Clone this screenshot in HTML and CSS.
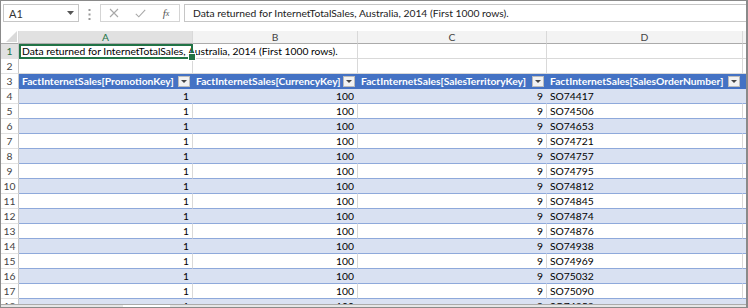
FILE: index.html
```html
<!DOCTYPE html>
<html lang="en">
<head>
    <meta charset="UTF-8" />
    <title>Book1 - Excel</title>
    <link rel="stylesheet" href="styles.css">
</head>
<body>
    <div class="window">
        <div class="formula-bar">
            <div class="name-box">
                <span>A1</span>
                <svg class="caret" width="7" height="4" viewBox="0 0 7 4"><path d="M0 0h7L3.5 4z" fill="#555"/></svg>
            </div>
            <svg class="grip" width="3" height="11" viewBox="0 0 3 11">
                <rect x="0.5" y="0" width="2" height="2" fill="#999"/>
                <rect x="0.5" y="4.5" width="2" height="2" fill="#999"/>
                <rect x="0.5" y="9" width="2" height="2" fill="#999"/>
            </svg>
            <div class="fx-buttons">
                <span class="fx-btn">
                    <svg width="10" height="10" viewBox="0 0 10 10"><path d="M1 1l8 8M9 1l-8 8" stroke="#a8a8a8" stroke-width="1.1" fill="none"/></svg>
                </span>
                <span class="fx-btn">
                    <svg width="11" height="9" viewBox="0 0 11 9"><path d="M0.8 4.8l3 3 6.4-7" stroke="#a8a8a8" stroke-width="1.1" fill="none"/></svg>
                </span>
                <span class="fx-btn fx">f<small>x</small></span>
            </div>
            <div class="formula-input">Data returned for InternetTotalSales, Australia, 2014 (First 1000 rows).</div>
        </div>

        <div class="sheet">
            <div class="row colhead">
                <div class="cell corner">
                    <svg width="11" height="11" viewBox="0 0 11 11"><path d="M11 0v11H0z" fill="#dadada"/></svg>
                </div>
                <div class="cell sel">A</div>
                <div class="cell">B</div>
                <div class="cell">C</div>
                <div class="cell">D</div>
                <div class="cell"></div>
            </div>

            <div class="row plain">
                <div class="cell rh sel">1</div>
                <div class="cell active">Data returned for InternetTotalSales, Australia, 2014 (First 1000 rows).</div>
                <div class="cell"></div>
                <div class="cell"></div>
                <div class="cell"></div>
                <div class="cell"></div>
            </div>

            <div class="row plain">
                <div class="cell rh">2</div>
                <div class="cell"></div>
                <div class="cell"></div>
                <div class="cell"></div>
                <div class="cell"></div>
                <div class="cell"></div>
            </div>

            <div class="row table-head">
                <div class="cell rh">3</div>
                <div class="cell"><span>FactInternetSales[PromotionKey]</span><span class="filter"></span></div>
                <div class="cell"><span>FactInternetSales[CurrencyKey]</span><span class="filter"></span></div>
                <div class="cell"><span>FactInternetSales[SalesTerritoryKey]</span><span class="filter"></span></div>
                <div class="cell"><span>FactInternetSales[SalesOrderNumber]</span><span class="filter"></span></div>
                <div class="cell"></div>
            </div>

            <div class="row table-row band">
                <div class="cell rh">4</div><div class="cell num">1</div><div class="cell num">100</div><div class="cell num">9</div><div class="cell">SO74417</div><div class="cell"></div>
            </div>
            <div class="row table-row">
                <div class="cell rh">5</div><div class="cell num">1</div><div class="cell num">100</div><div class="cell num">9</div><div class="cell">SO74506</div><div class="cell"></div>
            </div>
            <div class="row table-row band">
                <div class="cell rh">6</div><div class="cell num">1</div><div class="cell num">100</div><div class="cell num">9</div><div class="cell">SO74653</div><div class="cell"></div>
            </div>
            <div class="row table-row">
                <div class="cell rh">7</div><div class="cell num">1</div><div class="cell num">100</div><div class="cell num">9</div><div class="cell">SO74721</div><div class="cell"></div>
            </div>
            <div class="row table-row band">
                <div class="cell rh">8</div><div class="cell num">1</div><div class="cell num">100</div><div class="cell num">9</div><div class="cell">SO74757</div><div class="cell"></div>
            </div>
            <div class="row table-row">
                <div class="cell rh">9</div><div class="cell num">1</div><div class="cell num">100</div><div class="cell num">9</div><div class="cell">SO74795</div><div class="cell"></div>
            </div>
            <div class="row table-row band">
                <div class="cell rh">10</div><div class="cell num">1</div><div class="cell num">100</div><div class="cell num">9</div><div class="cell">SO74812</div><div class="cell"></div>
            </div>
            <div class="row table-row">
                <div class="cell rh">11</div><div class="cell num">1</div><div class="cell num">100</div><div class="cell num">9</div><div class="cell">SO74845</div><div class="cell"></div>
            </div>
            <div class="row table-row band">
                <div class="cell rh">12</div><div class="cell num">1</div><div class="cell num">100</div><div class="cell num">9</div><div class="cell">SO74874</div><div class="cell"></div>
            </div>
            <div class="row table-row">
                <div class="cell rh">13</div><div class="cell num">1</div><div class="cell num">100</div><div class="cell num">9</div><div class="cell">SO74876</div><div class="cell"></div>
            </div>
            <div class="row table-row band">
                <div class="cell rh">14</div><div class="cell num">1</div><div class="cell num">100</div><div class="cell num">9</div><div class="cell">SO74938</div><div class="cell"></div>
            </div>
            <div class="row table-row">
                <div class="cell rh">15</div><div class="cell num">1</div><div class="cell num">100</div><div class="cell num">9</div><div class="cell">SO74969</div><div class="cell"></div>
            </div>
            <div class="row table-row band">
                <div class="cell rh">16</div><div class="cell num">1</div><div class="cell num">100</div><div class="cell num">9</div><div class="cell">SO75032</div><div class="cell"></div>
            </div>
            <div class="row table-row">
                <div class="cell rh">17</div><div class="cell num">1</div><div class="cell num">100</div><div class="cell num">9</div><div class="cell">SO75090</div><div class="cell"></div>
            </div>
            <div class="row table-row band">
                <div class="cell rh">18</div><div class="cell num">1</div><div class="cell num">100</div><div class="cell num">9</div><div class="cell">SO74253</div><div class="cell"></div>
            </div>
        </div>

        <div class="tab-strip"><span class="tab"></span></div>
    </div>
</body>
</html>
```

FILE: styles.css
```css
:root {
    --grid-line: #d9d9d9;
    --header-bg: #f3f3f3;
    --header-text: #444;
    --excel-green: #217346;
    --table-blue: #4472c4;
    --band-blue: #d9e1f2;
    --band-line: #8ea9db;
}

* {
    box-sizing: border-box;
}

body {
    margin: 0;
    background: #fff;
    font-family: Lato, "Liberation Sans", sans-serif;
    font-size: 10.3px;
    color: #000;
}

.window {
    width: 748px;
    height: 308px;
    border: 1px solid #8a8a8a;
    border-right-width: 2px;
    display: flex;
    flex-direction: column;
    overflow: hidden;
    background: #fff;
}

/* formula bar */

.formula-bar {
    flex: none;
    height: 30px;
    display: flex;
    align-items: flex-start;
    padding: 3px 0 0 2px;
}

.name-box {
    width: 76px;
    height: 18px;
    border: 1px solid #c6c6c6;
    display: flex;
    align-items: center;
    justify-content: space-between;
    padding: 0 4px 0 5px;
    font-size: 11px;
    color: #333;
}

.grip {
    margin: 5px 0 0 9px;
}

.fx-buttons {
    width: 80px;
    height: 18px;
    margin-left: 9px;
    border: 1px solid #d4d4d4;
    display: flex;
}

.fx-btn {
    width: 26px;
    display: flex;
    align-items: center;
    justify-content: center;
}

.fx {
    font-family: "Liberation Serif", serif;
    font-style: italic;
    font-size: 11px;
    color: #555;
}

.fx small {
    font-size: 8px;
}

.formula-input {
    flex: 1;
    height: 18px;
    margin-left: 4px;
    border: 1px solid #c6c6c6;
    border-right: none;
    padding-left: 8px;
    line-height: 16px;
    color: #222;
    white-space: nowrap;
}

/* sheet grid */

.sheet {
    flex: 1;
    overflow: hidden;
}

.row {
    display: grid;
    grid-template-columns: 18px 174px 165px 189px 196px 1fr;
    height: 15px;
}

.cell {
    border-right: 1px solid var(--grid-line);
    border-bottom: 1px solid var(--grid-line);
    padding: 0 3px;
    line-height: 14px;
    white-space: nowrap;
    overflow: hidden;
}

.num {
    text-align: right;
}

.rh {
    padding: 0;
    text-align: center;
    color: var(--header-text);
    background: #fff;
    border-right-color: #c6c6c6;
    border-bottom-color: #e1e1e1;
}

.rh.sel {
    background: #e1e1e1;
    color: var(--excel-green);
}

.colhead {
    height: 13px;
}

.colhead .cell {
    background: var(--header-bg);
    color: var(--header-text);
    text-align: center;
    line-height: 12px;
    border-bottom-color: #ababab;
}

.colhead .sel {
    background: #e1e1e1;
    color: var(--excel-green);
}

.colhead .corner {
    background: #fff;
    display: flex;
    align-items: flex-end;
    justify-content: flex-end;
    padding: 0 1px 1px 0;
}

.plain .cell:not(.rh) {
    background: #fff;
}

.plain .active {
    position: relative;
    z-index: 1;
    overflow: visible;
    border-right: none;
    outline: 2px solid var(--excel-green);
    outline-offset: -2px;
}

.plain .active::after {
    content: "";
    position: absolute;
    right: -3px;
    bottom: -3px;
    width: 6px;
    height: 6px;
    background: var(--excel-green);
    border: 1px solid #fff;
}

.plain .active + .cell {
    background: transparent;
}

/* table */

.table-head .cell:not(.rh) {
    background: var(--table-blue);
    color: #fff;
    font-weight: bold;
    border-right-color: var(--table-blue);
    border-bottom-color: var(--table-blue);
    display: flex;
    align-items: center;
    justify-content: space-between;
    padding-right: 2px;
}

.filter {
    flex: none;
    width: 12px;
    height: 11px;
    background: #f2f2f2;
    border: 1px solid #bcbcbc;
    position: relative;
}

.filter::after {
    content: "";
    position: absolute;
    left: 2px;
    top: 3px;
    border-left: 3px solid transparent;
    border-right: 3px solid transparent;
    border-top: 3px solid #444;
}

.table-row .cell:not(.rh) {
    border-bottom-color: var(--band-line);
}

.table-row.band .cell:not(.rh) {
    background: var(--band-blue);
    border-right-color: var(--band-blue);
}

/* bottom strip */

.tab-strip {
    flex: none;
    height: 3px;
    border-top: 1px solid #ababab;
    background: #e6e6e6;
    padding-left: 122px;
}

.tab {
    display: block;
    width: 47px;
    height: 2px;
    background: #fff;
}
```
